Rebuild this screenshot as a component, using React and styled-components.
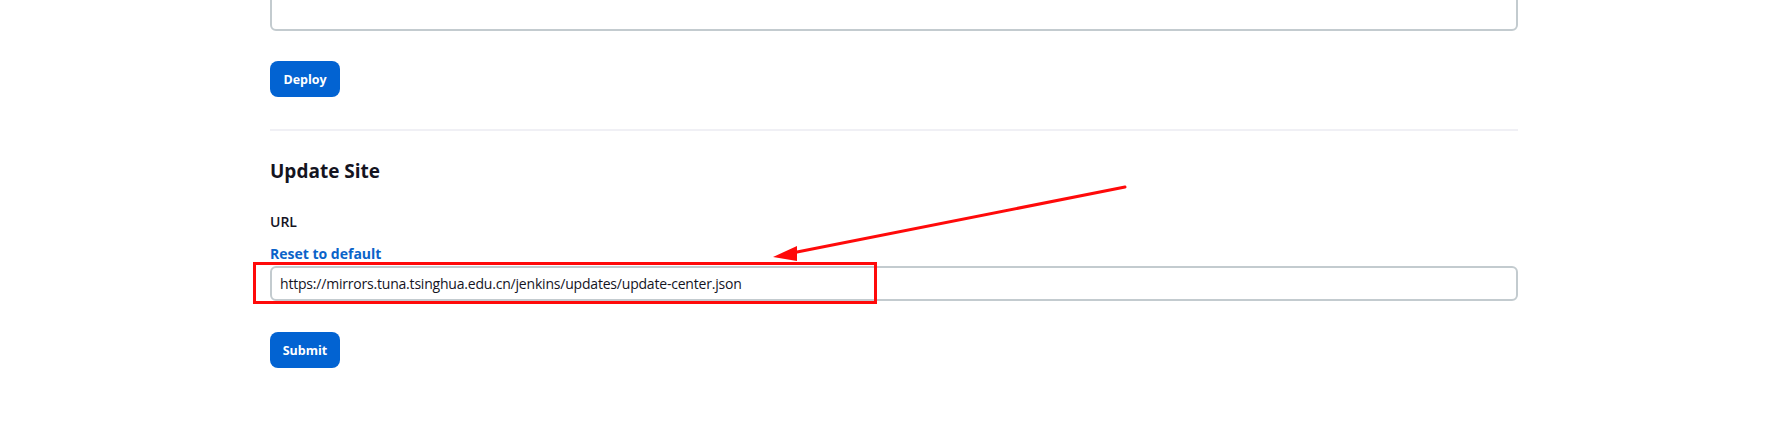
import React from 'react'
import styled, { createGlobalStyle } from 'styled-components'

const GlobalStyle = createGlobalStyle`
  html, body {
    margin: 0;
    padding: 0;
    background: #ffffff;
  }
  body {
    font-family: 'Open Sans', 'Noto Sans', sans-serif;
    color: #14141f;
  }
`

export default function App () {
  return (
    <Root>
      <GlobalStyle />
      <Page>
        <Block>
          <TextArea rows={3} />
          <Button type='button'>Deploy</Button>
        </Block>
        <Divider />
        <Block>
          <Heading>Update Site</Heading>
          <Label>URL</Label>
          <ResetLink href='#'>Reset to default</ResetLink>
          <Input
            readOnly
            value='https://mirrors.tuna.tsinghua.edu.cn/jenkins/updates/update-center.json'
          />
          <Button type='button'>Submit</Button>
        </Block>
      </Page>
      <Annotation viewBox='0 0 1778 427' aria-hidden='true'>
        <rect x='254.5' y='263.5' width='621' height='39' fill='none' stroke='#ff0a0a' strokeWidth='3' />
        <line x1='1125' y1='187' x2='792' y2='253' stroke='#ff0a0a' strokeWidth='3' strokeLinecap='round' />
        <polygon points='773,257 797,246 797,261' fill='#ff0a0a' />
      </Annotation>
    </Root>
  )
}

const Root = styled.div`
  position: relative;
  height: 427px;
  overflow: hidden;
`

const Page = styled.main`
  margin-top: -29px;
  padding: 0 260px 0 270px;
`

const Block = styled.div`
  display: flex;
  flex-direction: column;
  align-items: flex-start;
`

const TextArea = styled.textarea`
  box-sizing: border-box;
  width: 100%;
  height: 60px;
  border: 2px solid #c3cbcf;
  border-radius: 6px;
  resize: none;
  margin: 0 0 30px;
`

const Button = styled.button`
  box-sizing: border-box;
  width: 70px;
  height: 36px;
  padding: 0;
  border: none;
  border-radius: 8px;
  background-color: #0263d2;
  color: #ffffff;
  font-family: 'Open Sans', sans-serif;
  font-size: 12.5px;
  font-weight: 700;
  cursor: pointer;
`

const Divider = styled.hr`
  width: 100%;
  height: 2px;
  margin: 32px 0 0;
  border: none;
  background-color: #f0f0f5;
`

const Heading = styled.h2`
  margin: 28px 0 0;
  font-size: 19px;
  line-height: 24px;
  font-weight: 700;
`

const Label = styled.div`
  margin-top: 29px;
  font-size: 14px;
  line-height: 20px;
  font-weight: 600;
`

const ResetLink = styled.a`
  margin-top: 12px;
  font-size: 14px;
  line-height: 20px;
  font-weight: 700;
  color: #0a63c9;
  text-decoration: none;
`

const Input = styled.input`
  box-sizing: border-box;
  width: 100%;
  height: 35px;
  margin: 2px 0 31px;
  padding: 0 8px;
  border: 2px solid #c3cbcf;
  border-radius: 6px;
  font-family: 'Open Sans', sans-serif;
  font-size: 14px;
  letter-spacing: -0.2px;
  color: #14141f;
  outline: none;
`

const Annotation = styled.svg`
  position: absolute;
  top: 0;
  left: 0;
  width: 1778px;
  height: 427px;
  pointer-events: none;
`
